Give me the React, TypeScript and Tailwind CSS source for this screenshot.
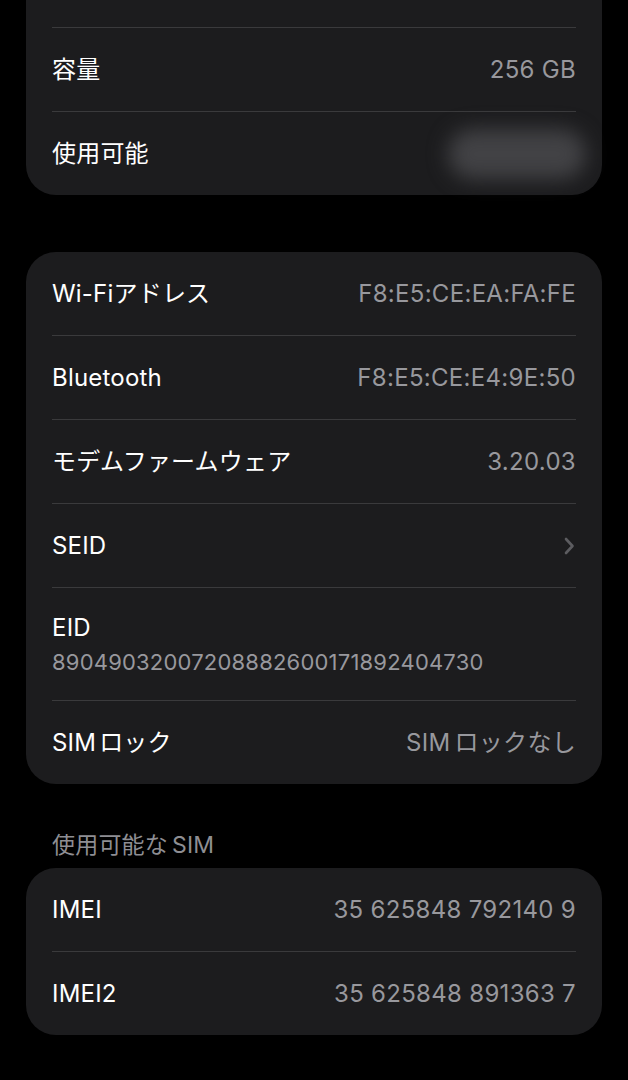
import React from "react";

const font = { fontFamily: '"Inter", "Noto Sans CJK JP", sans-serif' };

function Sep() {
  return <div className="mx-[26px] h-px bg-[#3a3a3c]" />;
}

function Row({ label, value, children }: { label: React.ReactNode; value?: React.ReactNode; children?: React.ReactNode }) {
  return (
    <div className="flex h-[83px] items-center justify-between px-[26px]">
      <span className="text-[24px] tracking-[0.2px] text-white">{label}</span>
      {value !== undefined ? <span className="text-[24px] tracking-[0.3px] text-[#98989d]">{value}</span> : children}
    </div>
  );
}

function Chevron() {
  return (
    <svg width="12" height="18" viewBox="0 0 12 18" fill="none" className="mr-[1px]">
      <polyline points="3,2 9.5,9 3,16" stroke="#5c5c60" strokeWidth="2.6" strokeLinecap="round" strokeLinejoin="round" />
    </svg>
  );
}

export default function App() {
  return (
    <div className="min-h-[1080px] w-full bg-black px-[26px] antialiased" style={font}>
      <div className="rounded-b-[30px] bg-[#1c1c1e]">
        <div className="h-[27px]" />
        <Sep />
        <Row label="容量" value="256 GB" />
        <Sep />
        <Row label="使用可能">
          <div className="-mr-[10px] h-[50px] w-[138px] rounded-full bg-[#424245] blur-[10px]" />
        </Row>
      </div>

      <div className="mt-[57px] rounded-[30px] bg-[#1c1c1e]">
        <Row label="Wi-Fiアドレス" value="F8:E5:CE:EA:FA:FE" />
        <Sep />
        <Row label="Bluetooth" value="F8:E5:CE:E4:9E:50" />
        <Sep />
        <Row label="モデムファームウェア" value="3.20.03" />
        <Sep />
        <Row label="SEID">
          <Chevron />
        </Row>
        <Sep />
        <div className="flex h-[112px] flex-col justify-center px-[26px]">
          <span className="text-[24px] leading-[32px] tracking-[0.2px] text-white">EID</span>
          <span className="mt-[3px] text-[22px] leading-[30px] tracking-[0.2px] text-[#98989d]">89049032007208882600171892404730</span>
        </div>
        <Sep />
        <Row
          label={<>SIM<span className="ml-[3px]">ロック</span></>}
          value={<>SIM<span className="ml-[4px]">ロックなし</span></>}
        />
      </div>

      <div className="mt-[47px] px-[26px] text-[23px] leading-[28px] tracking-[0.2px] text-[#8e8e93]">
        使用可能な<span className="ml-[4px]">SIM</span>
      </div>

      <div className="mt-[9px] rounded-[30px] bg-[#1c1c1e]">
        <Row label="IMEI" value="35 625848 792140 9" />
        <Sep />
        <Row label="IMEI2" value="35 625848 891363 7" />
      </div>
    </div>
  );
}
